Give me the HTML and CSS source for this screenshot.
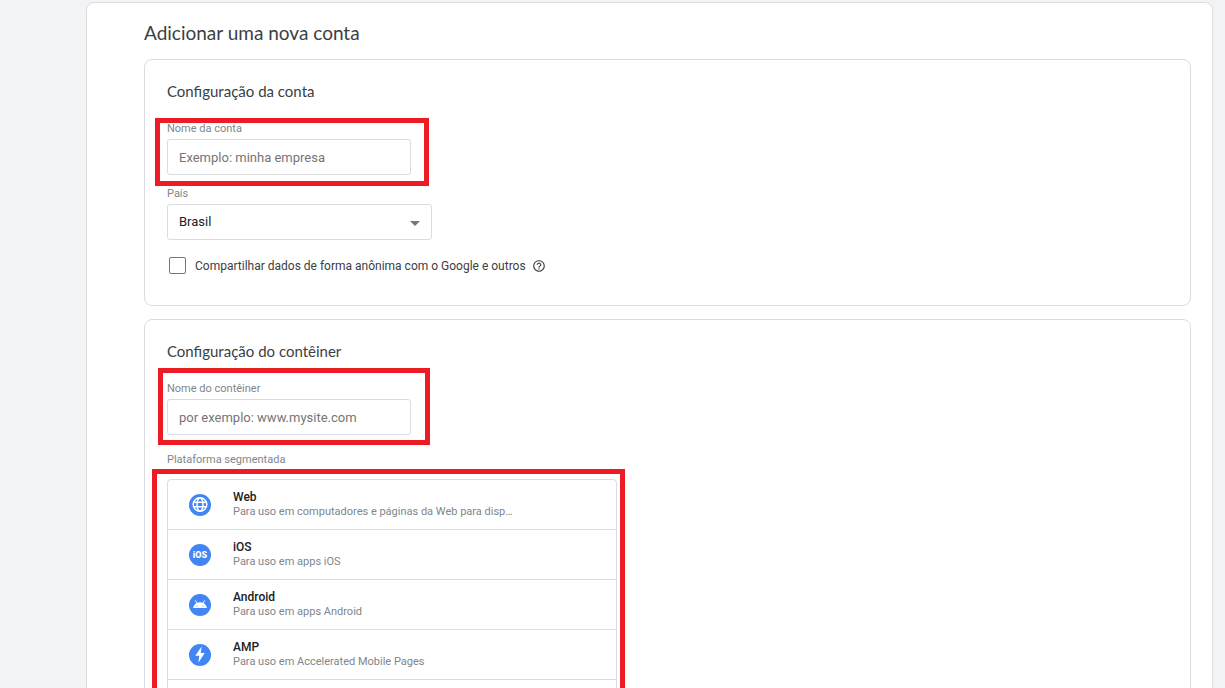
FILE: index.html
```
<!DOCTYPE html>
<html lang="pt-BR">

<head>
    <meta charset="UTF-8">
    <meta name="viewport" content="width=device-width, initial-scale=1.0">
    <title>Adicionar uma nova conta</title>
    <link rel="stylesheet" href="styles.css">
</head>

<body>
    <main class="page">
        <h1>Adicionar uma nova conta</h1>

        <!-- Account -->
        <section class="card">
            <h2>Configuração da conta</h2>
            <div class="field highlight highlight-account">
                <label for="account">Nome da conta</label>
                <input type="text" id="account" placeholder="Exemplo: minha empresa">
            </div>
            <div class="field country">
                <label for="country">País</label>
                <div class="select">
                    <select id="country">
                        <option>Brasil</option>
                    </select>
                </div>
            </div>
            <div class="share">
                <input type="checkbox" id="share">
                <label for="share">Compartilhar dados de forma anônima com o Google e outros</label>
                <button class="help" aria-label="Ajuda">
                    <svg viewBox="0 0 24 24" width="14" height="14">
                        <path fill="currentColor" d="M11 18h2v-2h-2v2zm1-16C6.48 2 2 6.48 2 12s4.480 10 10 10 10-4.480 10-10S17.520 2 12 2zm0 18c-4.410 0-8-3.590-8-8s3.590-8 8-8 8 3.590 8 8-3.590 8-8 8zm0-14c-2.210 0-4 1.790-4 4h2c0-1.100.9-2 2-2s2 .9 2 2c0 2-3 1.750-3 5h2c0-2.250 3-2.500 3-5 0-2.210-1.790-4-4-4z"/>
                    </svg>
                </button>
            </div>
        </section>

        <!-- Container -->
        <section class="card">
            <h2>Configuração do contêiner</h2>
            <div class="field highlight highlight-container">
                <label for="container">Nome do contêiner</label>
                <input type="text" id="container" placeholder="por exemplo: www.mysite.com">
            </div>
            <p class="platform-label" id="platform">Plataforma segmentada</p>
            <div class="highlight highlight-list">
                <ul class="platforms" aria-labelledby="platform">
                    <li>
                        <button class="platform">
                            <svg class="icon" viewBox="0 0 22 22">
                                <circle cx="11" cy="11" r="11" fill="#4285f4"/>
                                <g fill="none" stroke="#fff" stroke-width="1.500">
                                    <circle cx="11" cy="10.500" r="6.800"/>
                                    <ellipse cx="11" cy="10.500" rx="3" ry="6.800"/>
                                    <path d="M4.700 8.200h12.600M4.700 12.800h12.600"/>
                                </g>
                            </svg>
                            <span class="text">
                                <span class="name">Web</span>
                                <span class="desc">Para uso em computadores e páginas da Web para disp…</span>
                            </span>
                        </button>
                    </li>
                    <li>
                        <button class="platform">
                            <svg class="icon" viewBox="0 0 22 22">
                                <circle cx="11" cy="11" r="11" fill="#4285f4"/>
                                <text class="ios" x="11" y="14" text-anchor="middle">iOS</text>
                            </svg>
                            <span class="text">
                                <span class="name">iOS</span>
                                <span class="desc">Para uso em apps iOS</span>
                            </span>
                        </button>
                    </li>
                    <li>
                        <button class="platform">
                            <svg class="icon" viewBox="0 0 22 22">
                                <circle cx="11" cy="11" r="11" fill="#4285f4"/>
                                <path fill="#fff" d="M4.200 14a6.800 5.800 0 0 1 13.600 0z"/>
                                <path stroke="#fff" stroke-width="1" stroke-linecap="round" d="M6.500 6.700l1.700 2.700M15.500 6.700l-1.700 2.700"/>
                                <circle cx="8" cy="12" r=".6" fill="#4285f4"/>
                                <circle cx="14" cy="12" r=".6" fill="#4285f4"/>
                            </svg>
                            <span class="text">
                                <span class="name">Android</span>
                                <span class="desc">Para uso em apps Android</span>
                            </span>
                        </button>
                    </li>
                    <li>
                        <button class="platform">
                            <svg class="icon" viewBox="0 0 22 22">
                                <circle cx="11" cy="11" r="11" fill="#4285f4"/>
                                <path fill="#fff" d="M12.600 2.500L6.300 11.800h3.900L9.400 18.800l6.300-9.800h-3.900z"/>
                            </svg>
                            <span class="text">
                                <span class="name">AMP</span>
                                <span class="desc">Para uso em Accelerated Mobile Pages</span>
                            </span>
                        </button>
                    </li>
                    <li></li>
                </ul>
            </div>
        </section>
    </main>
</body>

</html>
```
FILE: styles.css
```
* {
    box-sizing: border-box;
}

body {
    margin: 0;
    background-color: #f1f3f4;
    color: #3c4043;
    font-family: Roboto, Arial, sans-serif;
    font-size: 12px;
}

.page {
    margin: 2px 12px 0 86px;
    padding: 18px 21px 40px 57px;
    background-color: #fff;
    border: 1px solid #dadce0;
    border-radius: 8px;
}

h1,
h2 {
    font-family: Lato, sans-serif;
    font-weight: 400;
}

h1 {
    margin: 0 0 14px;
    font-size: 19px;
    line-height: 24px;
}

h2 {
    margin: 0 0 20px;
    font-size: 15px;
    line-height: 20px;
}

.card {
    margin-bottom: 13px;
    padding: 21px 22px 29px;
    border: 1px solid #dadce0;
    border-radius: 8px;
}

.field {
    width: 244px;
}

.field label,
.platform-label {
    display: block;
    margin: 0 0 2px;
    color: #80868b;
    font-size: 11px;
    line-height: 16px;
}

.field input,
.field select {
    display: block;
    width: 100%;
    height: 36px;
    padding: 0 11px;
    background-color: #fff;
    border: 1px solid #dadce0;
    border-radius: 3px;
    color: #202124;
    font-family: inherit;
    font-size: 13px;
}

.field input::placeholder {
    color: #757575;
}

.country {
    width: 265px;
    margin-top: 11px;
}

.select {
    position: relative;
}

.field select {
    padding-bottom: 2px;
    appearance: none;
}

.select::after {
    content: "";
    position: absolute;
    top: 17px;
    right: 12px;
    border: 5px solid transparent;
    border-top-color: #757575;
    border-bottom: 0;
    pointer-events: none;
}

.share {
    display: flex;
    align-items: center;
    height: 20px;
    margin-top: 16px;
}

.share input {
    appearance: none;
    width: 17px;
    height: 17px;
    margin: 0 9px 2px 2px;
    border: 1px solid #757575;
    border-radius: 2px;
}

.help {
    display: flex;
    margin-left: 6px;
    padding: 0;
    background: none;
    border: none;
    color: #3c4043;
}

/* Red frames over the fields to fill in */
.highlight {
    position: relative;
}

.highlight::before {
    content: "";
    position: absolute;
    border: 5px solid #ed1c24;
    pointer-events: none;
}

.highlight-account::before {
    inset: -3px -18px -11px -12px;
}

.highlight-container::before {
    inset: -13px -19px -10px -9px;
}

.highlight-list::before {
    inset: -10px -8px -10px -15px;
}

.highlight-list {
    width: 450px;
}

.platform-label {
    margin: 17px 0 11px;
}

.platforms {
    margin: 0;
    padding: 0;
    list-style: none;
    border: 1px solid #dadce0;
    border-radius: 4px;
}

.platforms li {
    height: 50px;
    border-bottom: 1px solid #dadce0;
}

.platforms li:last-child {
    border-bottom: none;
}

.platform {
    display: flex;
    align-items: center;
    gap: 22px;
    width: 100%;
    height: 100%;
    padding: 0 21px;
    background: none;
    border: none;
    font-family: inherit;
    text-align: left;
}

.icon {
    flex: none;
    width: 22px;
    height: 22px;
}

.ios {
    fill: #fff;
    font-size: 9px;
    font-weight: 900;
}

.text {
    display: flex;
    flex-direction: column;
}

.name {
    color: #202124;
    font-size: 12px;
    font-weight: 500;
    line-height: 14px;
}

.desc {
    color: #80868b;
    font-size: 11px;
    line-height: 15px;
}
```
